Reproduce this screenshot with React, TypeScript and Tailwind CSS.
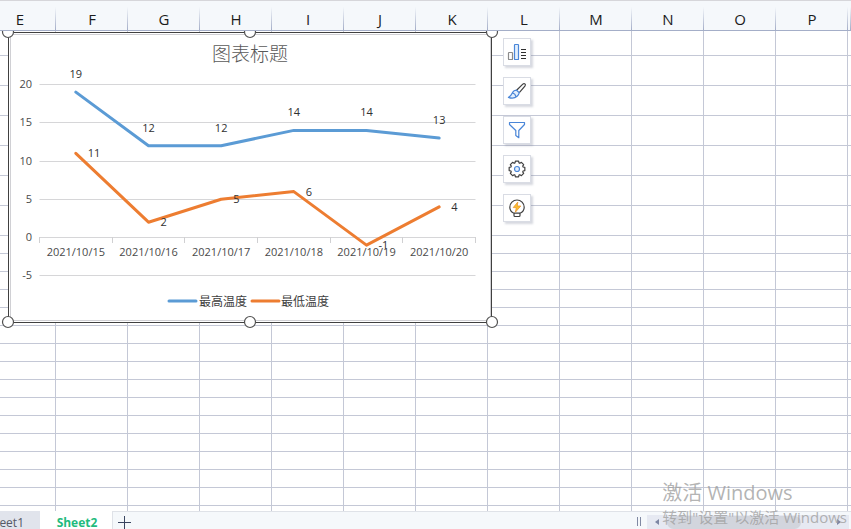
import type { ReactNode } from "react";

const COLUMNS = "EFGHIJKLMNOP".split("");

// First row is partly scrolled away, the next six are tall, the rest default.
const ROWS = ["h-[25px]", ...Array(6).fill("h-[30px]"), ...Array(40).fill("h-[18px]")] as string[];

const DATES = ["2021/10/15", "2021/10/16", "2021/10/17", "2021/10/18", "2021/10/19", "2021/10/20"];
const HIGH = [19, 12, 12, 14, 14, 13];
const LOW = [11, 2, 5, 6, -1, 4];
const TICKS = [20, 15, 10, 5, 0, -5];

const PLOT = { left: 39.5, right: 475.5, zero: 207.5, unit: 7.65 };
const STEP = (PLOT.right - PLOT.left) / DATES.length;

const px = (i: number) => PLOT.left + STEP * (i + 0.5);
const py = (v: number) => PLOT.zero - PLOT.unit * v;
const points = (values: number[]) => values.map((v, i) => `${px(i)},${py(v)}`).join(" ");

const HANDLES = [
  [8, 2],
  [250, 2],
  [492, 2],
  [8, 292],
  [250, 292],
  [492, 292],
];

// Eight teeth, four corners each.
const GEAR = Array.from({ length: 32 }, (_, i) => {
  const offset = [-0.32, -0.2, 0.2, 0.32][i % 4];
  const angle = (Math.floor(i / 4) * Math.PI) / 4 + offset;
  const r = i % 4 === 1 || i % 4 === 2 ? 8 : 6.4;
  return `${(10 + r * Math.cos(angle)).toFixed(2)},${(10 + r * Math.sin(angle)).toFixed(2)}`;
}).join(" ");

function TemperatureChart() {
  return (
    <svg
      width="500"
      height="300"
      viewBox="0 0 500 300"
      role="img"
      aria-label="图表标题"
      className="absolute left-0 top-[30px] font-['Open_Sans','Noto_Sans_CJK_SC',sans-serif] text-[11px]"
    >
      <rect x="8.5" y="2.5" width="483" height="290" fill="#fff" stroke="#404040" />
      <rect x="10.5" y="4.5" width="480" height="286" fill="#fff" stroke="#d0d0d4" />

      <text x="250" y="31" textAnchor="middle" fill="#595959" className="text-[19px] font-light">
        图表标题
      </text>

      {TICKS.map((t) => (
        <g key={t}>
          <line
            x1={PLOT.left}
            x2={PLOT.right}
            y1={Math.floor(py(t)) + 0.5}
            y2={Math.floor(py(t)) + 0.5}
            stroke="#d6d6d8"
          />
          <text x="32" y={Math.floor(py(t)) + 4} textAnchor="end" fill="#4a4a4a">
            {t}
          </text>
        </g>
      ))}

      {[...DATES, ""].map((_, i) => {
        const x = Math.floor(PLOT.left + STEP * i) + 0.5;
        return <line key={i} x1={x} x2={x} y1="207" y2="213" stroke="#d0d0d2" />;
      })}

      {DATES.map((d, i) => (
        <text key={d} x={px(i)} y="226" textAnchor="middle" fill="#4a4a4a">
          {d}
        </text>
      ))}

      <g fill="none" strokeWidth="3" strokeLinecap="round" strokeLinejoin="round">
        <polyline points={points(HIGH)} stroke="#5b9bd5" />
        <polyline points={points(LOW)} stroke="#ed7d31" />
        <line x1="169" x2="196" y1="271" y2="271" stroke="#5b9bd5" />
        <line x1="252" x2="279" y1="271" y2="271" stroke="#ed7d31" />
      </g>

      {HIGH.map((v, i) => (
        <text key={i} x={px(i)} y={py(v) - 14} textAnchor="middle" fill="#303030">
          {v}
        </text>
      ))}
      {LOW.map((v, i) => (
        <text key={i} x={px(i) + 12} y={py(v) + 4} fill="#303030">
          {v}
        </text>
      ))}

      <g fill="#404040" className="text-[12px]">
        <text x="199" y="276">最高温度</text>
        <text x="281" y="276">最低温度</text>
      </g>

      {HANDLES.map(([x, y]) => (
        <circle key={`${x}-${y}`} cx={x} cy={y} r="5.5" fill="#fff" stroke="#505050" strokeWidth="1.2" />
      ))}
    </svg>
  );
}

function ToolButton({ label, children }: { label: string; children: ReactNode }) {
  return (
    <button
      type="button"
      aria-label={label}
      className="flex size-7 items-center justify-center border border-[#d9dce4] bg-white shadow-[2px_2px_2px_rgba(120,125,150,0.3)]"
    >
      <svg width="20" height="20" viewBox="0 0 20 20" fill="none" strokeWidth="1.2" strokeLinejoin="round">
        {children}
      </svg>
    </button>
  );
}

function ChartTools() {
  return (
    <div className="absolute left-[503px] top-[38px] flex flex-col gap-[11px]">
      <ToolButton label="图表元素">
        <rect x="1.5" y="10.5" width="4" height="7" rx="0.6" stroke="#8a8a8a" />
        <rect x="7.5" y="2.5" width="4" height="15" rx="0.6" fill="#e4f0fd" stroke="#4a86d8" />
        <path d="M14 7.5h5M14 10.5h5M14 13.5h5M14 16.5h5" stroke="#303030" />
      </ToolButton>
      <ToolButton label="图表样式">
        <path d="M9.6 9.2l6.2-6.1c1.6-1.4 3.4.3 2.1 2l-5.6 6.6" stroke="#404040" />
        <path
          d="M9.6 9.2c-1.800-.1-3.200.7-4 2.200-.8 1.800-2 3.600-4.200 5 3 1.200 6.600.8 8.700-1.100 1.100-1 1.900-2.200 2.200-3.600zM9.600 9.200l2.700 2.500M5.400 12c1.800.2 3 1.300 3.500 3.600"
          fill="#e4f0fd"
          stroke="#4a86d8"
        />
      </ToolButton>
      <ToolButton label="图表筛选器">
        <path d="M2.500 2.500h15v2l-5.700 6v7.200l-3-2.200v-5l-6.300-6z" stroke="#4a86d8" />
      </ToolButton>
      <ToolButton label="设置">
        <polygon points={GEAR} stroke="#404040" />
        <circle cx="10" cy="10" r="2.5" fill="#e4f0fd" stroke="#4a86d8" />
      </ToolButton>
      <ToolButton label="智能推荐">
        <path
          d="M7 15.200c-2.600-1-4.200-3.300-4.200-6C2.800 5.200 6 2 10 2s7.200 3.200 7.200 7.200c0 2.700-1.600 5-4.200 6zM7 15.200v2.300c0 .6.400 1 1 1h4c.6 0 1-.4 1-1v-2.300"
          stroke="#404040"
        />
        <path d="M10.800 4L6.200 9.600h3.100l-.9 4.600 5.400-6.200h-3.500z" fill="#fbc02d" stroke="#e8962e" strokeWidth="0.8" />
      </ToolButton>
    </div>
  );
}

const HEAD =
  "relative z-10 h-[31px] border-b border-t border-b-[#a4aec8] border-t-[#d6d6da] bg-[#f5f8fb] bg-[linear-gradient(to_bottom,transparent_20%,#a4aec8)] bg-[length:1px_100%] bg-right bg-no-repeat p-0 pt-1.5 text-[15px] font-normal leading-5 text-[#1c1c1c]";

function Grid() {
  return (
    <div className="-ml-4">
      <table className="w-full table-fixed border-separate border-spacing-0">
        <thead>
          <tr>
            {COLUMNS.map((c) => (
              <th key={c} scope="col" className={`${HEAD} w-[72px]`}>
                {c}
              </th>
            ))}
            <td className={HEAD} />
          </tr>
        </thead>
        <tbody>
          {ROWS.map((height, r) => (
            <tr key={r}>
              {COLUMNS.map((c) => (
                <td key={c} className={`${height} border-b border-r border-[#c4c8d6] p-0`} />
              ))}
              <td className={`${height} border-b border-[#c4c8d6] p-0`} />
            </tr>
          ))}
        </tbody>
      </table>
    </div>
  );
}

function SheetBar() {
  return (
    <footer className="flex h-[18px] shrink-0 items-start overflow-hidden text-[12px] leading-6">
      <button type="button" className="flex h-6 w-10 justify-end bg-[#e1e4ec] pr-4 text-[#555a66]">
        Sheet1
      </button>
      <button type="button" className="h-6 w-[72px] bg-white pl-0.5 font-bold text-[#1fbb7d]">
        Sheet2
      </button>
      <div className="flex h-6 flex-1 items-start border-l border-t border-[#dfe2e8] bg-[#f5f8fb]">
        <button type="button" aria-label="新建工作表" className="ml-1 pt-1">
          <svg width="14" height="14" viewBox="0 0 14 14" stroke="#3a4560">
            <path d="M7.5 0v13M1 6.500h13" />
          </svg>
        </button>
        <div className="ml-auto mr-1.5 mt-[5px] h-[9px] w-1 border-x border-[#8089a3]" />
        <div className="mr-0.5 mt-[3px] flex h-4 w-[202px] items-start bg-[#e6e9f2] px-2">
          <button type="button" aria-label="向左滚动" className="pt-1">
            <svg width="4" height="6" viewBox="0 0 4 6" fill="#7d86a3">
              <path d="M4 0v6L0 3z" />
            </svg>
          </button>
          <div className="ml-2 mt-px h-[13px] w-[134px] rounded-full bg-[#d2d5dd]" />
          <button type="button" aria-label="向右滚动" className="ml-auto pt-1">
            <svg width="4" height="6" viewBox="0 0 4 6" fill="#7d86a3">
              <path d="M0 0v6l4-3z" />
            </svg>
          </button>
        </div>
      </div>
    </footer>
  );
}

export default function App() {
  return (
    <div className="relative flex h-screen flex-col overflow-hidden bg-white font-['Open_Sans','Noto_Sans_CJK_SC',sans-serif]">
      <main className="relative min-h-0 flex-1 overflow-hidden">
        <Grid />
        <TemperatureChart />
        <ChartTools />
      </main>
      <SheetBar />
      <div className="pointer-events-none absolute bottom-0 right-0 whitespace-nowrap pr-1 text-[#a0a0a0]/80">
        <p className="text-[20px] leading-6">激活 Windows</p>
        <p className="text-[15px] leading-6">转到"设置"以激活 Windows</p>
      </div>
    </div>
  );
}
